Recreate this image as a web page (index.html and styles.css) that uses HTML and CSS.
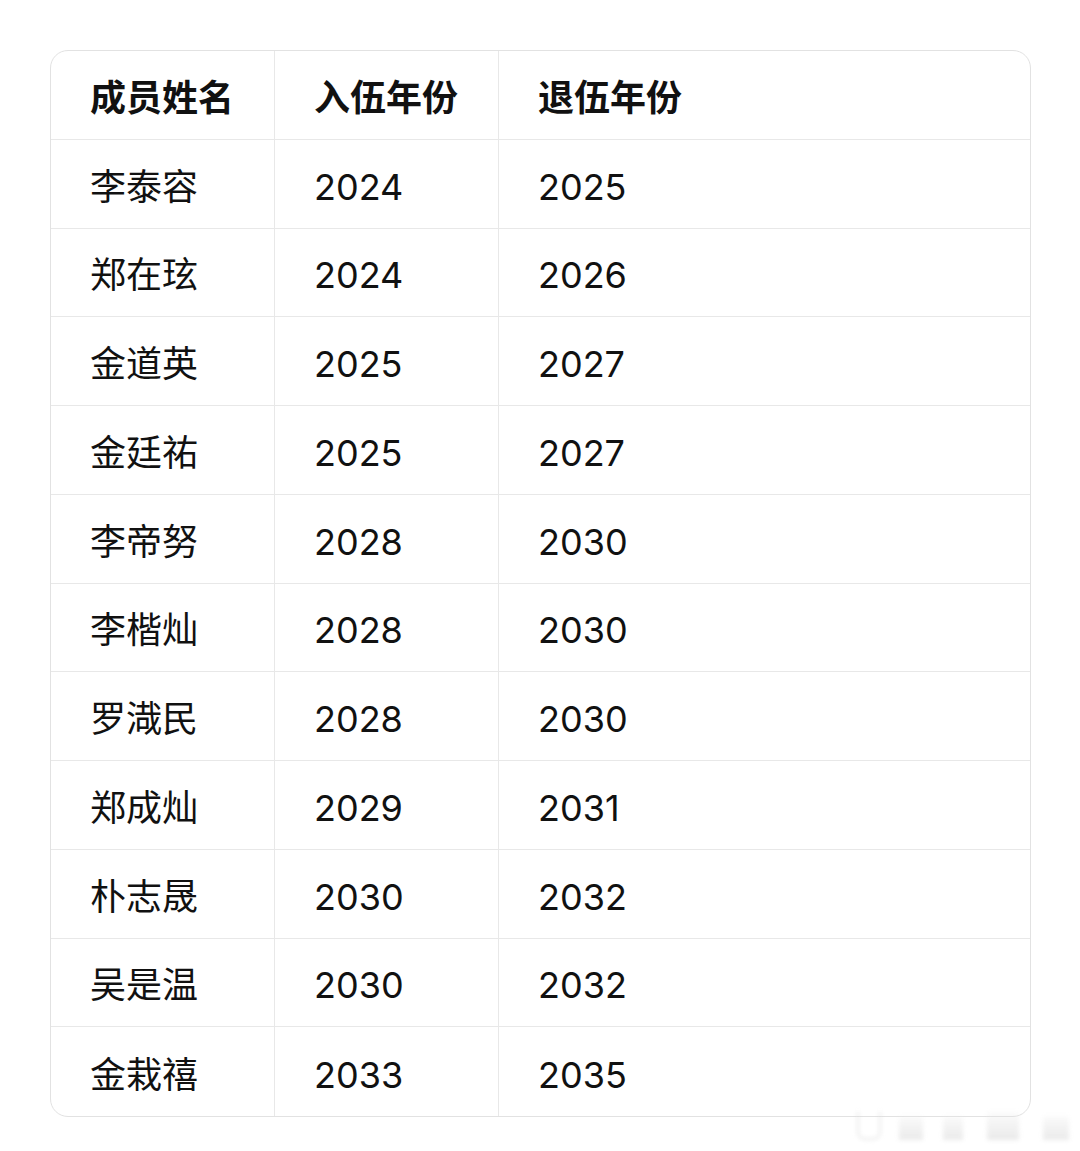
FILE: index.html
```html
<!DOCTYPE html>
<html lang="zh-CN">
<head>
<meta charset="utf-8">
<link rel="stylesheet" href="styles.css">
</head>
<body>
<div class="page">
  <table class="members">
    <colgroup><col class="c1"><col class="c2"><col class="c3"></colgroup>
    <thead>
      <tr><th>成员姓名</th><th>入伍年份</th><th>退伍年份</th></tr>
    </thead>
    <tbody>
      <tr><td>李泰容</td><td>2024</td><td>2025</td></tr>
      <tr><td>郑在玹</td><td>2024</td><td>2026</td></tr>
      <tr><td>金道英</td><td>2025</td><td>2027</td></tr>
      <tr><td>金廷祐</td><td>2025</td><td>2027</td></tr>
      <tr><td>李帝努</td><td>2028</td><td>2030</td></tr>
      <tr><td>李楷灿</td><td>2028</td><td>2030</td></tr>
      <tr><td>罗渽民</td><td>2028</td><td>2030</td></tr>
      <tr><td>郑成灿</td><td>2029</td><td>2031</td></tr>
      <tr><td>朴志晟</td><td>2030</td><td>2032</td></tr>
      <tr><td>吴是温</td><td>2030</td><td>2032</td></tr>
      <tr><td>金栽禧</td><td>2033</td><td>2035</td></tr>
    </tbody>
  </table>
  <div class="watermark">
    <span class="wm wm-u"></span>
    <span class="wm wm-a"></span>
    <span class="wm wm-b"></span>
    <span class="wm wm-c"></span>
    <span class="wm wm-d"></span>
  </div>
</div>
</body>
</html>
```
FILE: styles.css
```css
html, body {
  margin: 0;
  padding: 0;
  background: #ffffff;
}
body {
  font-family: Inter, "Noto Sans CJK SC", "Noto Sans", sans-serif;
  color: #111111;
}
.page {
  position: relative;
  width: 1080px;
  height: 1151px;
  padding: 50px 0 0 50px;
  box-sizing: border-box;
}
.members {
  width: 981px;
  table-layout: fixed;
  border-collapse: separate;
  border-spacing: 0;
  border: 1.5px solid #e2e2e2;
  border-radius: 18px;
  overflow: hidden;
}
.c1 { width: 224px; }
.c2 { width: 224px; }
.c3 { width: auto; }
.members th,
.members td {
  height: 88.75px;
  box-sizing: border-box;
  padding: 6px 0 0 39px;
  text-align: left;
  vertical-align: middle;
  font-size: 36px;
  line-height: 40px;
  border-right: 1.5px solid #e8e8e8;
  border-bottom: 1.5px solid #e8e8e8;
}
.members th {
  font-weight: 700;
}
.members td {
  font-weight: 400;
}
.members th:last-child,
.members td:last-child {
  border-right: none;
}
.members tbody tr:last-child td {
  border-bottom: none;
}
.watermark {
  position: absolute;
  left: 855px;
  top: 1104px;
  width: 220px;
  height: 38px;
}
.wm {
  position: absolute;
  bottom: 2px;
  background: linear-gradient(180deg, rgba(235,235,235,0.2), rgba(220,220,220,0.6));
  filter: blur(2px);
}
.wm-u {
  left: 2px; width: 20px; height: 26px;
  background: transparent;
  border: 2px solid rgba(220,220,220,0.6);
  border-top: none;
  border-radius: 0 0 8px 8px;
}
.wm-a { left: 44px; width: 24px; height: 24px; }
.wm-b { left: 88px; width: 20px; height: 24px; }
.wm-c { left: 132px; width: 32px; height: 28px; }
.wm-d { left: 188px; width: 26px; height: 24px; }
```
